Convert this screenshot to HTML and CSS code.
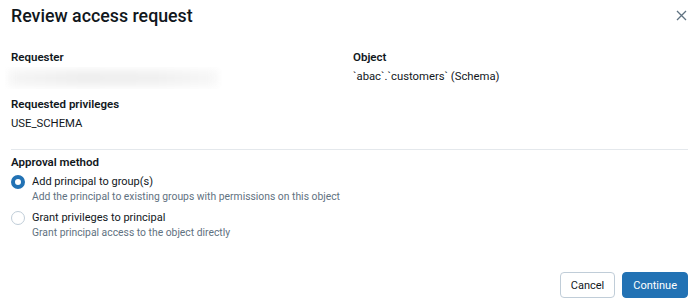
FILE: index.html
```html
<!DOCTYPE html>
<html>
<head>
<meta charset="utf-8">
<link rel="stylesheet" href="styles.css">
</head>
<body>
<div class="modal">
  <div class="header">
    <h1 class="title">Review access request</h1>
    <button class="close" aria-label="Close">
      <svg width="11" height="11" viewBox="0 0 11 11"><path d="M1 1 L10 10 M10 1 L1 10" stroke="#5f7281" stroke-width="1.3" fill="none"/></svg>
    </button>
  </div>
  <div class="details">
    <div class="field">
      <div class="label">Requester</div>
      <div class="blur-wrap"><div class="blurred"></div></div>
    </div>
    <div class="field">
      <div class="label">Object</div>
      <div class="value">`abac`.`customers` (Schema)</div>
    </div>
    <div class="field">
      <div class="label">Requested privileges</div>
      <div class="value">USE_SCHEMA</div>
    </div>
  </div>
  <div class="divider"></div>
  <div class="approval">
    <div class="label">Approval method</div>
    <div class="options">
      <label class="option">
        <span class="radio checked"></span>
        <span class="option-text">
          <span class="option-title">Add principal to group(s)</span>
          <span class="option-desc">Add the principal to existing groups with permissions on this object</span>
        </span>
      </label>
      <label class="option">
        <span class="radio"></span>
        <span class="option-text">
          <span class="option-title">Grant privileges to principal</span>
          <span class="option-desc">Grant principal access to the object directly</span>
        </span>
      </label>
    </div>
  </div>
  <div class="footer">
    <button class="btn">Cancel</button>
    <button class="btn primary">Continue</button>
  </div>
</div>
</body>
</html>
```
FILE: styles.css
```css
* { box-sizing: border-box; }
html, body { margin: 0; padding: 0; background: #fff; }
body {
  font-family: "Roboto", "Liberation Sans", sans-serif;
  color: #11171c;
  font-size: 11.3px;
  width: 700px;
  height: 305px;
  overflow: hidden;
}
.modal { padding: 0 12px 0 11px; }
.header {
  display: flex;
  justify-content: space-between;
  align-items: flex-start;
  height: 47px;
}
.title {
  margin: 0;
  padding-top: 2px;
  font-size: 17.8px;
  line-height: 28px;
  font-weight: 500;
}
.close {
  border: 0;
  background: none;
  padding: 0;
  margin-top: 10px;
  margin-right: 1px;
  width: 11px;
  height: 11px;
  display: flex;
}
.details {
  display: grid;
  grid-template-columns: 342px 1fr;
  row-gap: 5px;
}
.label {
  font-weight: 600;
  font-size: 11.5px;
  line-height: 20px;
}
.value {
  line-height: 20px;
  font-size: 11.3px;
}
.blur-wrap {
  position: relative;
  height: 22px;
  margin-left: -6px;
  width: 217px;
  overflow: hidden;
}
.blurred {
  position: absolute;
  inset: 3px 4px;
  background: linear-gradient(90deg, #f5f5f5, #eeeeee 35%, #f0f0f0 70%, #f8f8f8);
  filter: blur(4px);
}
.divider {
  height: 1px;
  background: #e4e8ec;
  margin-top: 15px;
  margin-bottom: 2px;
}
.options {
  display: flex;
  flex-direction: column;
  gap: 6px;
  margin-top: 2px;
}
.option {
  display: flex;
  gap: 7px;
  align-items: flex-start;
}
.radio {
  width: 14px;
  height: 14px;
  border-radius: 50%;
  border: 1px solid #c0cdd8;
  background: #fff;
  margin-top: 1px;
  flex: none;
}
.radio.checked {
  border: 4px solid #2272b4;
  background: #fff;
}
.option-text { display: flex; flex-direction: column; }
.option-title { font-size: 11px; line-height: 16px; }
.option-desc { font-size: 10.35px; line-height: 14px; color: #5f7281; }
.footer {
  display: flex;
  justify-content: flex-end;
  gap: 7px;
  margin-top: 32px;
}
.btn {
  font-family: inherit;
  font-size: 11px;
  height: 26px;
  padding: 0 10px;
  border: 1px solid #c0cdd8;
  border-radius: 4px;
  background: #fff;
  color: #11171c;
}
.btn.primary {
  background: #2272b4;
  border-color: #2272b4;
  color: #fff;
}
```
